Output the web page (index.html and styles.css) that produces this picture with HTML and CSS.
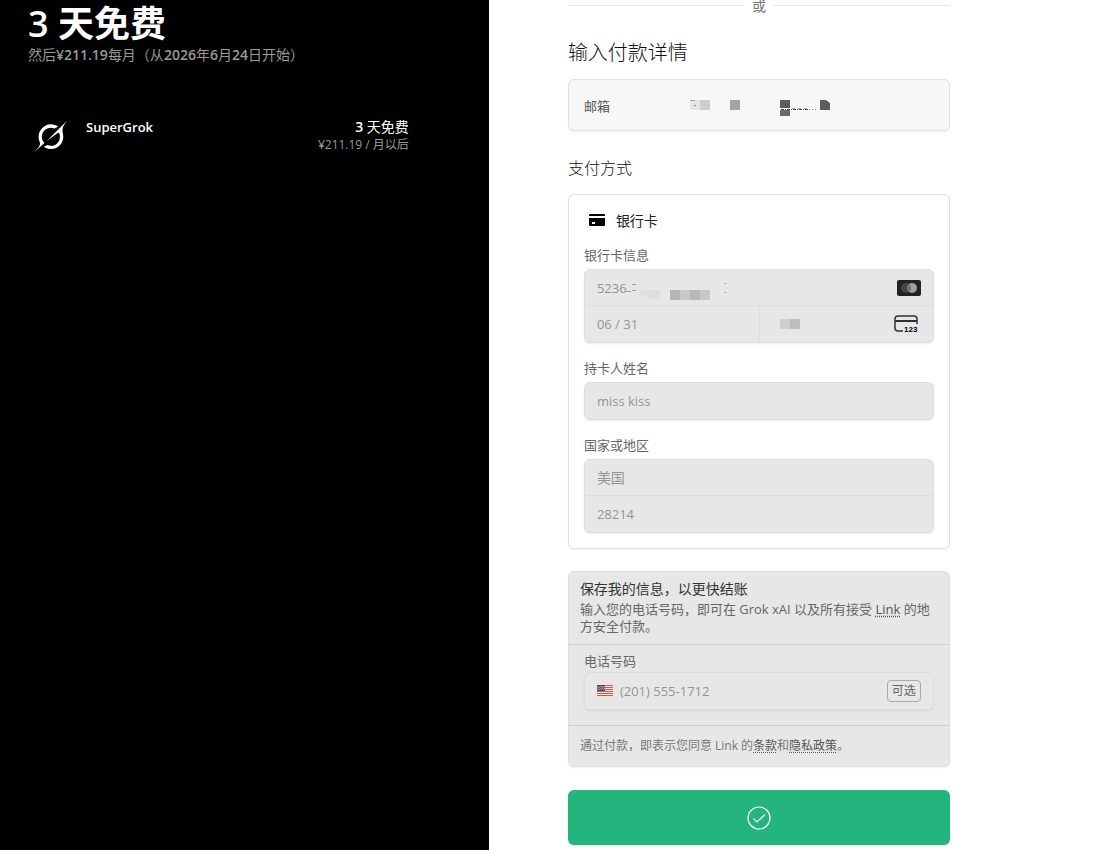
FILE: index.html
```html
<!DOCTYPE html>
<html lang="zh-CN">

	<head>
		<meta charset="UTF-8">
		<title>SuperGrok</title>
		<link rel="stylesheet" href="styles.css">
	</head>

	<body>
		<div class="page">
			<div class="summary">
				<h1>3 天免费</h1>
				<p class="after">然后<b>¥211.19</b>每月（从<b>2026</b>年<b>6</b>月<b>24</b>日开始）</p>
				<div class="product">
					<svg class="logo" viewBox="0 0 24 24" fill="#fff">
						<path d="M9.27 15.29l7.978-5.897c.391-.29.95-.177 1.137.272.98 2.369.542 5.215-1.41 7.169-1.951 1.954-4.667 2.382-7.149 1.406l-2.711 1.257c3.889 2.661 8.611 2.003 11.562-.953 2.341-2.344 3.066-5.539 2.388-8.42l.006.007c-.983-4.232.242-5.924 2.75-9.383.06-.082.12-.164.179-.248l-3.301 3.305v-.01L9.267 15.292M7.623 16.723c-2.792-2.67-2.31-6.801.071-9.184 1.761-1.763 4.647-2.483 7.166-1.425l2.705-1.25a7.808 7.808 0 00-1.829-1A8.975 8.975 0 005.984 5.83c-2.533 2.536-3.33 6.436-1.962 9.764 1.022 2.487-.653 4.246-2.34 6.022-.599.63-1.199 1.259-1.682 1.925l7.62-6.815" />
					</svg>
					<div class="name">SuperGrok</div>
					<div class="price">
						<div class="now"><b>3</b> 天免费</div>
						<div class="later">¥211.19 / 月以后</div>
					</div>
				</div>
			</div>

			<form class="payment">
				<div class="or"><span>或</span></div>
				<h2>输入付款详情</h2>
				<div class="email">
					<span class="email-label">邮箱</span>
					<svg width="142" height="26" viewBox="0 -8 142 26">
						<path fill="#e4e4e4" d="M0 0h10v10H0z" />
						<path fill="#cecece" d="M10 0h10v10H10z" />
						<path fill="#a4a4a4" d="M40 0h10v10H40z" />
						<path fill="#5c5c5c" d="M90 0h10v8H90zM130 0h6l4 3v7h-10z" />
						<path fill="#6a6a6a" d="M90 10h10v6H90z" />
						<path stroke="#888" stroke-dasharray="2 1" d="M1 .5h4M4 5.500h2" />
						<path stroke="#444" stroke-dasharray="3 1 1 1" d="M91 9.500h27" />
						<path stroke="#aaa" stroke-dasharray="3 3" d="M102 8.500h15" />
						<path stroke="#888" stroke-dasharray="1 2" d="M119 9.500h9" />
					</svg>
				</div>

				<h3>支付方式</h3>
				<div class="card">
					<div class="card-title">
						<svg width="16" height="12" viewBox="0 0 16 12">
							<path d="M1 0h14a1 1 0 0 1 1 1v1H0V1a1 1 0 0 1 1-1zM0 4h16v7a1 1 0 0 1-1 1H1a1 1 0 0 1-1-1zM3 8v2h3V8z" fill-rule="evenodd" />
						</svg>
						<span>银行卡</span>
					</div>

					<label for="number">银行卡信息</label>
					<div class="group">
						<div class="row number">
							<input type="text" id="number" value="5236" />
							<!--遮挡的卡号-->
							<svg class="mask" width="106" height="18" viewBox="0 0 106 18">
								<path stroke="#a0a0a0" d="M3 9.500h5M9 2.500h4M9 8.500h4" />
								<path fill="#dedede" d="M17 8h20v10l-20-5z" />
								<path fill="#b5b5b5" d="M47 8h10v10H47z" />
								<path fill="#c8c8c8" d="M57 8h10v10H57zM77 8h10v10H77z" />
								<path fill="#b8b8b8" d="M67 8h10v10H67z" />
								<path stroke="#bbb" d="M101 1.500h3M101 10.500h3" />
							</svg>
							<svg width="24" height="16" viewBox="0 0 24 16">
								<rect width="24" height="16" rx="2" fill="#222" />
								<circle cx="9" cy="8" r="5" fill="#444" />
								<circle cx="15" cy="8" r="5" fill="#a0a0a0" />
								<path d="M12 4a5 5 0 0 1 0 8 5 5 0 0 1 0-8" fill="#6e6e6e" />
							</svg>
						</div>
						<div class="row half">
							<input type="text" id="expiry" value="06 / 31" aria-label="有效期" />
							<div class="cvc">
								<svg width="20" height="10" viewBox="0 0 20 10">
									<path fill="#cfcfcf" d="M0 0h10v10H0z" />
									<path fill="#bdbdbd" d="M10 0h10v10H10z" />
								</svg>
								<svg width="26" height="18" viewBox="0 0 26 18">
									<rect x="1" y="1" width="22" height="15" rx="3" fill="none" stroke="#333" stroke-width="1.500" />
									<path fill="#332e2e" d="M1 5h22v2H1z" />
									<path fill="#e7e7e7" d="M9 9h17v9H9z" />
									<text x="10" y="17" class="digits">123</text>
								</svg>
							</div>
						</div>
					</div>

					<label for="holder">持卡人姓名</label>
					<div class="group">
						<div class="row last">
							<input type="text" id="holder" value="miss kiss" />
						</div>
					</div>

					<label for="country">国家或地区</label>
					<div class="group">
						<div class="row">
							<select id="country">
								<option>美国</option>
							</select>
						</div>
						<div class="row last">
							<input type="text" value="28214" aria-label="邮编" />
						</div>
					</div>
				</div>

				<div class="link">
					<div class="link-head">
						<h4>保存我的信息，以更快结账</h4>
						<p>输入您的电话号码，即可在 Grok xAI 以及所有接受 <a href="##">Link</a> 的地方安全付款。</p>
					</div>
					<div class="link-phone">
						<label for="phone">电话号码</label>
						<div class="group">
							<div class="row last">
								<svg width="16" height="12" viewBox="0 0 16 12">
									<path fill="#f3e9e9" d="M0 0h16v11H0z" />
									<path fill="#e0524d" d="M0 0h16v1H0zM0 2h16v1H0zM0 4h16v1H0zM0 6h16v1H0zM0 8h16v1H0zM0 10h16v1H0z" />
									<path fill="#4c4f5c" d="M0 0h8v6H0z" />
									<path stroke="#a5a7b0" stroke-dasharray="1 1" d="M1 1.500h7M0 2.500h7M1 3.500h7M0 4.500h7" />
								</svg>
								<input type="tel" id="phone" placeholder="(201) 555-1712" />
								<span class="optional">可选</span>
							</div>
						</div>
					</div>
					<div class="link-foot">通过付款，即表示您同意 Link 的<a href="##">条款</a>和<a href="##">隐私政策</a>。</div>
				</div>

				<button type="button" class="pay" aria-label="支付">
					<svg width="24" height="24" viewBox="0 0 24 24" fill="none" stroke="#fff">
						<circle cx="12" cy="12" r="11" stroke-width="1.200" />
						<path d="M6.500 12.500l3.500 3.500 8-7.500" stroke-width="1.200" />
					</svg>
				</button>
			</form>
		</div>
	</body>

</html>
```
FILE: styles.css
```css
* {
	margin: 0;
	padding: 0;
	box-sizing: border-box;
}

body {
	font-family: "Open Sans", "Noto Sans CJK SC", sans-serif;
	font-size: 13px;
	color: #333;
	background: #fff;
}

svg {
	display: block;
	flex: none;
}

a {
	color: #555;
	text-decoration: underline dotted;
	text-underline-offset: 2px;
}

.page {
	display: grid;
	grid-template-columns: 4fr 5fr;
	min-height: 100vh;
}

/*左侧*/
.summary {
	padding: 0 80px 0 28px;
	background: #000;
	color: #fff;
}

.summary h1 {
	font-size: 36px;
	line-height: 48px;
	font-weight: 600;
}

.summary b {
	font-weight: 600;
}

.after {
	font-size: 14px;
	line-height: 14px;
	color: #999;
	white-space: nowrap;
}

.product {
	display: flex;
	margin-top: 56px;
	padding-left: 6px;
}

.logo {
	width: 33px;
	height: 33px;
	margin-top: 2px;
}

.name {
	flex: 1;
	margin-left: 19px;
	line-height: 18px;
	font-size: 13px;
	font-weight: 600;
}

.price {
	text-align: right;
}

.now {
	font-size: 14px;
	line-height: 18px;
}

.later {
	font-size: 12px;
	line-height: 18px;
	color: #999;
}

/*右侧*/
.payment {
	width: 100%;
	max-width: 461px;
	padding: 0 0 5px 79px;
}

.or {
	display: flex;
	align-items: center;
	gap: 8px;
	height: 11px;
	line-height: 10px;
	font-size: 14px;
	color: #777;
}

.or:before,
.or:after {
	content: "";
	flex: 1;
	height: 1px;
	background: #e6e6e6;
}

.payment h2 {
	margin-top: 27px;
	font-size: 20px;
	line-height: 30px;
	font-weight: 300;
	color: #111;
}

.email {
	display: flex;
	align-items: center;
	height: 52px;
	margin-top: 11px;
	padding: 0 15px;
	border: 1px solid #e0e0e0;
	border-radius: 6px;
	background: #f7f7f7;
	color: #555;
	box-shadow: 0 1px 2px rgba(0, 0, 0, 0.06);
}

.email-label {
	width: 106px;
}

.payment h3 {
	margin: 25px 0 14px;
	font-size: 16px;
	line-height: 24px;
	font-weight: 300;
	color: #111;
}

.card {
	padding: 15px;
	border: 1px solid #e0e0e0;
	border-radius: 6px;
	box-shadow: 0 1px 2px rgba(0, 0, 0, 0.06);
}

.card-title {
	display: flex;
	align-items: center;
	gap: 11px;
	height: 20px;
	margin-bottom: 17px;
	padding-left: 5px;
	font-size: 14px;
	color: #222;
}

label {
	display: block;
	line-height: 16px;
	margin-bottom: 6px;
	color: #666;
}

.group {
	border: 1px solid #dedede;
	border-radius: 6px;
	background: #e7e7e7;
	box-shadow: 0 1px 2px rgba(0, 0, 0, 0.08);
}

.group + label {
	margin-top: 17px;
}

.row {
	position: relative;
	display: flex;
	align-items: center;
	height: 36px;
	padding: 0 12px;
	border-bottom: 1px solid #dedede;
}

.row.last,
.row.half {
	border-bottom: 0;
}

input,
select {
	flex: 1;
	min-width: 0;
	border: 0;
	outline: 0;
	background: none;
	font-family: inherit;
	font-size: 13px;
	color: #959595;
	opacity: 1;
}

select {
	appearance: none;
	font-size: 14px;
}

input::placeholder {
	color: #959595;
}

.mask {
	position: absolute;
	left: 38px;
	top: 12px;
}

.row.half {
	padding: 0;
}

.row.half input {
	padding-left: 12px;
}

.cvc {
	display: flex;
	flex: none;
	width: 50%;
	height: 100%;
	align-items: center;
	justify-content: space-between;
	padding: 0 13px 0 20px;
	border-left: 1px solid #dedede;
}

.digits {
	font: bold 8px "Liberation Sans", sans-serif;
}

/*Link*/
.link {
	margin-top: 22px;
	border: 1px solid #dedede;
	border-radius: 6px;
	background: #e7e7e7;
	box-shadow: 0 1px 2px rgba(0, 0, 0, 0.06);
}

.link-head {
	padding: 6px 11px 9px;
	border-bottom: 1px solid #ccc;
}

.link-head h4 {
	margin-bottom: 1px;
	font-size: 14px;
	line-height: 22px;
	font-weight: 400;
}

.link-head p {
	line-height: 17px;
	color: #666;
}

.link-phone {
	padding: 7px 15px 15px;
	border-bottom: 1px solid #ccc;
}

.link-phone label {
	line-height: 18px;
	margin-bottom: 2px;
}

.link-phone input {
	margin-left: 7px;
}

.optional {
	padding: 0 4px;
	border: 1px solid #aaa;
	border-radius: 4px;
	font-size: 12px;
	line-height: 20px;
	color: #666;
}

.link-foot {
	padding: 11px;
	font-size: 12px;
	line-height: 18px;
	color: #777;
}

.pay {
	display: flex;
	align-items: center;
	justify-content: center;
	width: 100%;
	height: 55px;
	margin-top: 23px;
	border: 0;
	border-radius: 6px;
	background: #24b47e;
	box-shadow: 0 1px 2px rgba(0, 0, 0, 0.12);
	cursor: pointer;
}
```
